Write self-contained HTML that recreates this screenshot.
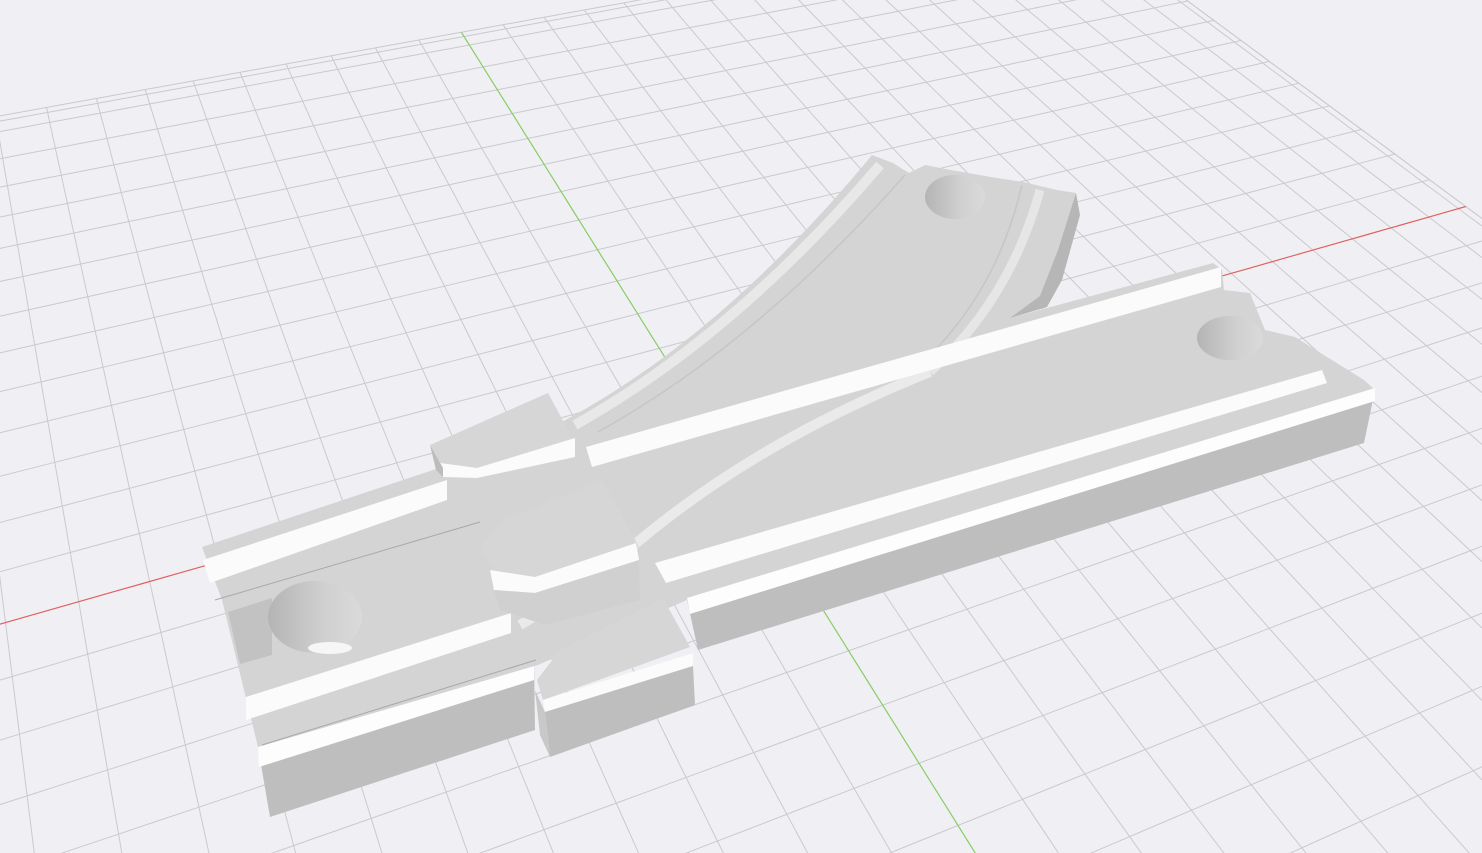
<!DOCTYPE html>
<html><head><meta charset="utf-8"><style>
html,body{margin:0;padding:0;background:#f0f0f4;overflow:hidden;}
svg{display:block}
</style></head><body>
<svg id="s" width="1482" height="853" viewBox="0 0 1482 853" xmlns="http://www.w3.org/2000/svg">
<defs>
<linearGradient id="hole" x1="0" y1="0" x2="1" y2="0"><stop offset="0" stop-color="#b4b4b4"/><stop offset="0.6" stop-color="#d0d0d0"/><stop offset="1" stop-color="#dadada"/></linearGradient>
</defs>
<rect width="1482" height="853" fill="#f0f0f4"/>
<g id="grid" stroke="#cacace" stroke-width="1" fill="none"></g>
<g id="axes" fill="none" stroke-width="1.2"></g>
<g id="obj" stroke="none">
<!-- left front face -->
<polygon points="258,747 534,660 535,730 270,817" fill="#bebebe"/>
<polygon points="258,747 534,660 534,680 259,767" fill="#fdfdfd"/>
<!-- main top surface -->
<path d="M202,547 L433,470 L560,423 Q722,337 872,155 L893,163 L909,173 L925,165 L951,170 L991,177 L1023,182 L1057,190 L1076,193 L1076,207 L1047,307 L1010,318 L1213,263 L1222,270 L1224,290 L1250,293 L1265,330 L1295,337 L1327,357 L1364,380 L1375,390 L687,600 L538,665 L258,747 L222,600 Z" fill="#d4d4d4"/>
<!-- curved side -->
<polygon points="1076,193 1080,215 1062,280 1047,307 1010,318 1040,296 1058,250" fill="#b6b6b6"/>
<!-- right front face -->
<polygon points="687,600 1375,390 1364,443 698,650" fill="#bebebe"/>
<polygon points="687,598 1375,388 1375,401 690,614" fill="#fdfdfd"/>
<!-- curved rails -->
<path d="M575,425 Q735,335 880,165" stroke="#e8e8e8" stroke-width="10" fill="none"/>
<path d="M598,432 Q755,345 905,175" stroke="#c6c6c6" stroke-width="1.5" fill="none"/>
<path d="M930,372 Q1010,300 1040,190" stroke="#e6e6e6" stroke-width="9" fill="none"/>
<path d="M912,372 Q995,300 1022,185" stroke="#c6c6c6" stroke-width="1.5" fill="none"/>
<path d="M930,372 Q760,440 640,540 Q580,590 520,625" stroke="#eaeaea" stroke-width="10" fill="none"/>
<!-- straight rails -->
<polygon points="586,447 1221,267 1221,287 592,467" fill="#fbfbfb"/>
<polygon points="655,563 1322,370 1327,383 666,583" fill="#fbfbfb"/>
<polygon points="246,697 511,613 511,633 246,720" fill="#fbfbfb"/>
<polygon points="203,560 447,480 447,500 210,583" fill="#fbfbfb"/>
<line x1="215" y1="600" x2="480" y2="522" stroke="#a8a8a8" stroke-width="1"/>
<line x1="262" y1="745" x2="536" y2="660" stroke="#a8a8a8" stroke-width="1"/>
<!-- left hole -->
<polygon points="228,612 272,598 272,655 240,664" fill="#c2c2c2"/>
<ellipse cx="315" cy="617" rx="47" ry="36" fill="url(#hole)"/>
<ellipse cx="330" cy="648" rx="22" ry="6" fill="#f6f6f6"/>
<!-- small holes -->
<ellipse cx="955" cy="197" rx="30" ry="22" fill="url(#hole)"/>
<ellipse cx="1230" cy="338" rx="33" ry="22" fill="url(#hole)"/>
<!-- block A -->
<polygon points="430,445 548,393 575,443 477,470 443,468" fill="#d6d6d6"/>
<polygon points="433,462 477,468 575,438 575,457 477,478 443,477" fill="#fbfbfb"/>
<polygon points="430,445 443,468 443,477 436,470" fill="#bcbcbc"/>
<!-- block B -->
<polygon points="480,547 504,520 602,480 639,547 535,577 494,570" fill="#d6d6d6"/>
<polygon points="490,570 535,577 636,543 639,560 535,593 494,590" fill="#fbfbfb"/>
<polygon points="494,590 535,593 639,560 640,600 545,625 500,610" fill="#d0d0d0"/>
<!-- block C -->
<polygon points="537,680 560,650 663,598 690,647 543,700" fill="#d6d6d6"/>
<polygon points="543,700 693,653 693,666 545,712" fill="#fbfbfb"/>
<polygon points="545,712 693,666 695,705 550,757" fill="#bebebe"/>
<polygon points="535,690 545,712 550,757 540,735" fill="#c8c8c8"/>
</g>
</svg>
<script>
(function(){
var NS="http://www.w3.org/2000/svg";
var O=[706,423],VX=[4904,-773],VY=[-200,-1024],a=0.013,b=0.0272;
function P(u,v){var d=a*u+b*v+1;return [(a*u*VX[0]+b*v*VY[0]+O[0])/d,(a*u*VX[1]+b*v*VY[1]+O[1])/d];}
var UMIN=-70,UMAX=17,VMIN=-60,VMAX=13.6;
function seg(g,u0,v0,u1,v1,col,w){
  var n=200,pts=[];
  for(var i=0;i<=n;i++){var t=i/n,u=u0+(u1-u0)*t,v=v0+(v1-v0)*t;
    if(a*u+b*v+1>0.04){var p=P(u,v);pts.push(p[0].toFixed(1)+","+p[1].toFixed(1));}}
  if(pts.length<2)return;
  var l=document.createElementNS(NS,"polyline");l.setAttribute("points",pts.join(" "));
  if(col)l.setAttribute("stroke",col);if(w)l.setAttribute("stroke-width",w);
  g.appendChild(l);
}
var g=document.getElementById("grid"),ax=document.getElementById("axes");
for(var u=Math.ceil(UMIN);u<=UMAX;u++){ if(u!==0) seg(g,u,VMIN,u,VMAX);}
for(var v=Math.ceil(VMIN);v<=VMAX;v++){ if(v!==0) seg(g,UMIN,v,UMAX,v);}
seg(g,UMAX,VMIN,UMAX,VMAX);seg(g,UMAX-0.2,VMIN,UMAX-0.2,VMAX-0.2);
seg(g,UMIN,VMAX,UMAX,VMAX);seg(g,UMIN,VMAX-0.2,UMAX-0.2,VMAX-0.2);
seg(ax,UMIN,0,UMAX,0,"#e06060",1.2);
seg(ax,0,VMIN,0,VMAX,"#88cc66",1.2);
})();
</script>
</body></html>
